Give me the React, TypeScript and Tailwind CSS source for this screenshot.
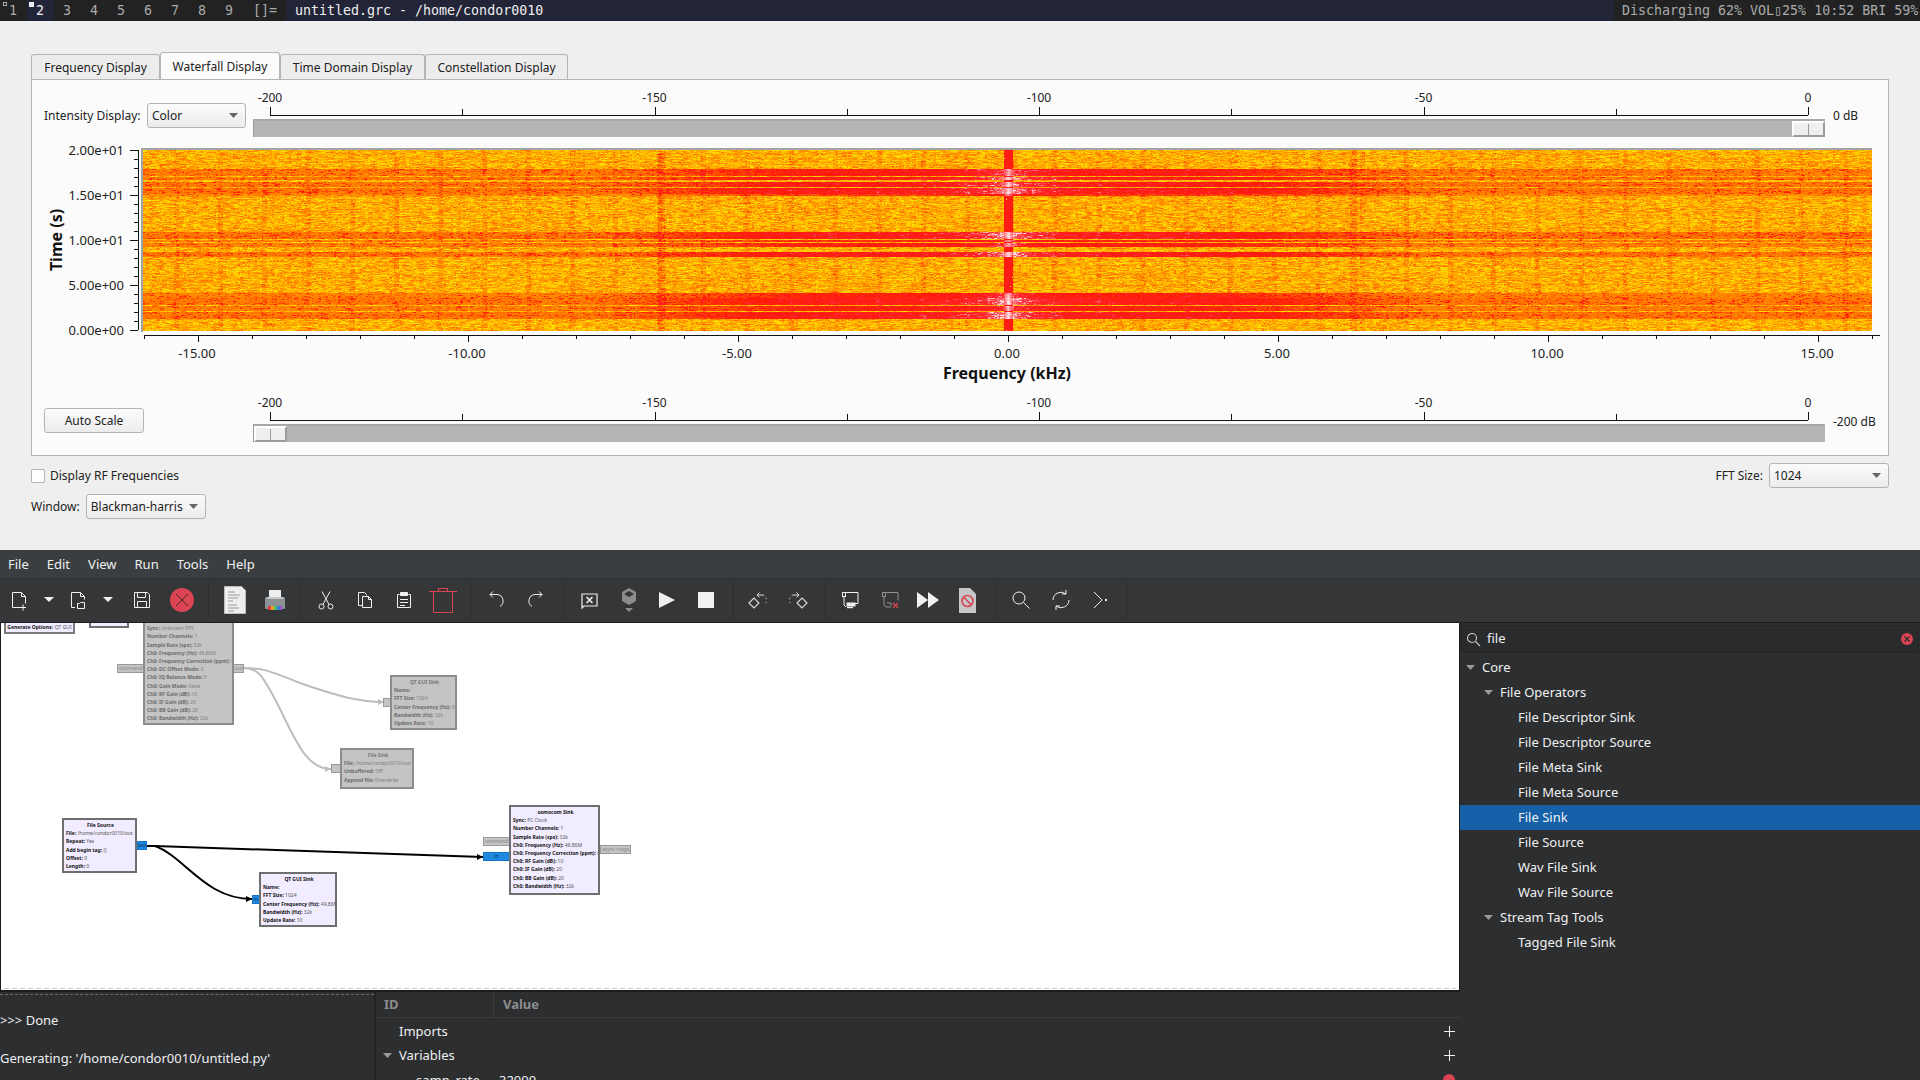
import { useEffect, useRef } from "react";

const TAGS = ["1", "2", "3", "4", "5", "6", "7", "8", "9"];
const TABS = ["Frequency Display", "Waterfall Display", "Time Domain Display", "Constellation Display"];

// waterfall bands: first row, last row (relative to the plot), strength
const BANDS: [number, number, number][] = [
  [19, 25, 0.85], [27, 29, 1], [32, 36, 0.95], [38, 43, 1], [44, 45, 0.6],
  [82, 88, 1], [90, 91, 0.7], [93, 96, 0.8], [102, 106, 1],
  [143, 147, 0.8], [148, 154, 1], [156, 160, 0.8], [162, 168, 1],
];

const STOPS: [number, number, number, number][] = [
  [0, 255, 255, 0], [0.18, 255, 214, 0], [0.3, 255, 168, 0], [0.45, 255, 105, 0],
  [0.58, 255, 24, 8], [0.8, 255, 40, 50], [1, 255, 228, 232],
];

function colorFor(p: number): [number, number, number] {
  const v = Math.max(0, Math.min(1, p));
  for (let i = 1; i < STOPS.length; i++) {
    if (v <= STOPS[i][0]) {
      const a = STOPS[i - 1];
      const b = STOPS[i];
      const t = (v - a[0]) / (b[0] - a[0]);
      return [a[1] + (b[1] - a[1]) * t, a[2] + (b[2] - a[2]) * t, a[3] + (b[3] - a[3]) * t];
    }
  }
  return [255, 228, 232];
}

function Waterfall() {
  const ref = useRef<HTMLCanvasElement>(null);
  useEffect(() => {
    const ctx = ref.current?.getContext("2d");
    if (!ctx) return;
    const W = 1729;
    const H = 181;
    let seed = 12345;
    const rnd = () => {
      seed = (seed * 1664525 + 1013904223) >>> 0;
      return seed / 4294967296;
    };
    const rowBand = new Array(H).fill(0);
    const rowJitter = rowBand.map(() => (rnd() - 0.5) * 0.05);
    BANDS.forEach(([a, b, s]) => {
      for (let y = a; y <= b; y++) rowBand[y] = s;
    });
    const img = ctx.createImageData(W, H);
    for (let y = 0; y < H; y++) {
      let prev = rnd();
      let cur = rnd();
      let col = -1;
      for (let x = 0; x < W; x++) {
        const c = Math.floor(x / 1.69);
        if (c !== col) {
          col = c;
          if (c % 2 === 0) prev = cur;
          cur = rnd();
        }
        const dx = x + 143 - 1008;
        const dist = Math.abs(dx);
        let p = 0.285 + (cur * 0.6 + prev * 0.4 - 0.5) * 0.36 + rowJitter[y];
        // vertical stripes
        const sx = (x + 143 - 175 + 440) % 43.9;
        if (sx < 5) p += 0.05;
        if (Math.abs(x + 143 - 661) < 4 || Math.abs(x + 143 - 1353) < 4) p += 0.08;
        // horizontal bursts
        const env = dist < 200 ? 1 : dist > 420 ? 0 : (420 - dist) / 220;
        const band = rowBand[y];
        if (band > 0) {
          p = Math.max(p, 0.3) + band * (0.11 + 0.23 * env) + (cur - 0.5) * 0.07;
          p += band * 0.3 * Math.exp(-dist / 30);
        }
        // carrier
        if (dist < 5) {
          p = band > 0 ? 0.72 + band * 0.28 * (1 - dist / 9) + (cur - 0.5) * 0.08 : 0.66 - dist * 0.01;
        }
        let rgb = colorFor(p);
        if (band === 0 && rnd() < 0.0012) rgb = [170, 255, 70];
        const i = (y * W + x) * 4;
        img.data[i] = rgb[0];
        img.data[i + 1] = rgb[1];
        img.data[i + 2] = rgb[2];
        img.data[i + 3] = 255;
      }
    }
    ctx.putImageData(img, 0, 0);
  }, []);
  return <canvas ref={ref} width={1729} height={181} className="block" />;
}

function Caret({ className = "" }: { className?: string }) {
  return (
    <svg width="9" height="5" viewBox="0 0 9 5" className={className}>
      <path d="M0 0h9L4.5 5z" fill="currentColor" />
    </svg>
  );
}

function Combo({ label, className }: { label: string; className: string }) {
  return (
    <div className={`flex h-[25px] items-center justify-between rounded-[3px] border border-[#b4b4b4] bg-gradient-to-b from-[#fbfbfb] to-[#ececec] pl-[4px] pr-[7px] text-[12px] text-[#222] ${className}`}>
      <span>{label}</span>
      <Caret className="text-[#666]" />
    </div>
  );
}

function Scale({ top }: { top: number }) {
  const labels = ["-200", "-150", "-100", "-50", "0"];
  const ticks = Array.from({ length: 9 }, (_, i) => 17 + i * 192.25);
  return (
    <svg width="1572" height="29" className="block">
      <line x1="17" x2="1555" y1="25.5" y2="25.5" stroke="#111" />
      {ticks.map((x, i) => (
        <line key={i} x1={Math.round(x) + 0.5} x2={Math.round(x) + 0.5} y1={i % 2 ? 19 : 17} y2="25" stroke="#111" />
      ))}
      {labels.map((l, i) => (
        <text key={l} x={17 + i * 384.5} y={top} textAnchor="middle" className="fill-[#222] text-[12px]">{l}</text>
      ))}
    </svg>
  );
}

function Slider({ right }: { right?: boolean }) {
  return (
    <div className={`flex h-[18px] w-[1572px] border-l border-t-2 border-l-[#9a9a9a] border-t-[#a8a8a8] bg-[#b5b5b5] ${right ? "justify-end" : "justify-start"}`}>
      <div className="flex h-[16px] w-[33px] items-center justify-center border-b-2 border-l-2 border-r-2 border-t-2 border-b-[#9c9c9c] border-l-white border-r-[#9c9c9c] border-t-white bg-[#efefef]">
        <div className="h-[11px] w-px bg-[#9a9a9a]" />
      </div>
    </div>
  );
}

function YAxis() {
  const major: [string, number][] = [["2.00e+01", 2], ["1.50e+01", 47], ["1.00e+01", 92], ["5.00e+00", 137], ["0.00e+00", 182]];
  const minor = Array.from({ length: 21 }, (_, i) => 2 + i * 9);
  return (
    <svg width="109" height="184" className="block shrink-0 overflow-visible">
      <line x1="106.5" x2="106.5" y1="2" y2="182" stroke="#111" />
      {minor.map((y, i) => (
        <line key={y} x1={i % 5 === 0 ? 98 : 102} x2="106" y1={y + 0.5} y2={y + 0.5} stroke="#111" />
      ))}
      {major.map(([t, y]) => (
        <text key={t} x="92" y={y + 4.5} textAnchor="end" className="fill-[#222] text-[13px]">{t}</text>
      ))}
      <text transform="translate(29.5 92) rotate(-90)" textAnchor="middle" className="fill-[#111] text-[16px] font-bold">Time (s)</text>
    </svg>
  );
}

function XAxis() {
  const labels = ["-15.00", "-10.00", "-5.00", "0.00", "5.00", "10.00", "15.00"];
  const ticks = Array.from({ length: 33 }, (_, i) => 112 + i * 54);
  return (
    <svg width="1856" height="49" className="block overflow-visible">
      <line x1="112" x2="1848" y1="3.5" y2="3.5" stroke="#111" />
      {ticks.map((x, i) => (
        <line key={x} x1={x + 0.5} x2={x + 0.5} y1="3" y2={i % 5 === 1 ? 10 : 7} stroke="#111" />
      ))}
      {labels.map((l, i) => (
        <text key={l} x={165 + i * 270} y="26" textAnchor="middle" className="fill-[#222] text-[13px]">{l}</text>
      ))}
      <text x="975" y="47" textAnchor="middle" className="fill-[#111] text-[16px] font-bold">Frequency (kHz)</text>
    </svg>
  );
}

type BlockProps = {
  pos: string;
  off?: boolean;
  title?: string;
  rows: [string, string][];
};

function Block({ pos, off, title, rows }: BlockProps) {
  return (
    <div className={`absolute overflow-hidden border-2 pl-[2px] pt-px text-[5px] leading-[8.2px] whitespace-nowrap ${off ? "border-[#8c8c8c] bg-[#c4c4c4] text-[#808080]" : "border-[#6f6f6f] bg-[#f1ecff] text-[#555]"} ${pos}`}>
      <div className={`h-[8.2px] text-center font-bold ${off ? "text-[#777]" : "text-[#111]"}`}>{title}</div>
      {rows.map(([k, v]) => (
        <div key={k}>
          <span className={`font-bold ${off ? "text-[#6c6c6c]" : "text-[#111]"}`}>{k}: </span>
          {v}
        </div>
      ))}
    </div>
  );
}

function Port({ pos, label, blue }: { pos: string; label: string; blue?: boolean }) {
  return (
    <div className={`absolute flex h-[9px] items-center justify-center overflow-hidden border text-[5px] ${blue ? "border-[#1a74c4] bg-[#1f88e0] text-[#0c2c4c]" : "border-[#999] bg-[#c4c4c4] text-[#888]"} ${pos}`}>
      {label}
    </div>
  );
}

function FlowCanvas() {
  return (
    <div className="relative h-[369px] shrink-0 overflow-hidden border-b-2 border-[#1b1c1d] bg-white shadow-[inset_1px_0_0_#1b1c1d,inset_-1px_0_0_#1b1c1d]">
      <svg width="1460" height="368" className="absolute left-0 top-0">
        <g fill="none" stroke="#bdbdbd" strokeWidth="2">
          <path d="M243 45C262 45 268 47 300 60C340 74 360 79 384 79" />
          <path d="M243 45C258 45 262 52 275 76C295 115 305 146 331 146" />
        </g>
        <path d="M384 79l-6-3v6zM331 146l-6-3v6z" fill="#bdbdbd" />
        <g fill="none" stroke="#000" strokeWidth="2">
          <path d="M147 223L155 223L483 234" />
          <path d="M147 223L155 223C185 234 205 276 252 276" />
        </g>
        <path d="M483 234l-6-3v6zM252 276l-6-3v6z" fill="#000" />
        <line x1="4" x2="1456" y1="365.5" y2="365.5" stroke="#c8c8c8" strokeDasharray="5 3" />
      </svg>
      <div className="absolute -top-[23px] left-[4px] flex h-[34px] w-[71px] items-end justify-center gap-[2px] border-2 border-[#7a7a7a] bg-[#f1ecff] pb-[1px] text-[5px] leading-[8px] whitespace-nowrap">
        <b className="text-[#111]">Generate Options:</b>
        <span className="text-[#555]">QT GUI</span>
      </div>
      <div className="absolute -top-[20px] left-[89px] h-[25px] w-[40px] border-2 border-[#6f6f6f] bg-[#f1ecff]" />
      <Port pos="left-[117px] top-[41px] w-[27px]" label="command" />
      <Port pos="left-[233px] top-[41px] w-[11px]" label="out" />
      <Block
        off
        pos="left-[143px] -top-[10px] h-[112px] w-[91px]"
        rows={[
          ["Sync", "Unknown PPS"], ["Number Channels", "1"], ["Sample Rate (sps)", "32k"], ["Ch0: Frequency (Hz)", "49.86M"],
          ["Ch0: Frequency Correction (ppm)", "0"], ["Ch0: DC Offset Mode", "0"], ["Ch0: IQ Balance Mode", "0"], ["Ch0: Gain Mode", "False"],
          ["Ch0: RF Gain (dB)", "10"], ["Ch0: IF Gain (dB)", "20"], ["Ch0: BB Gain (dB)", "20"], ["Ch0: Bandwidth (Hz)", "32k"],
        ]}
      />
      <Port pos="left-[383px] top-[75px] w-[8px]" label="" />
      <Block
        off
        pos="left-[390px] top-[52px] h-[55px] w-[67px]"
        title="QT GUI Sink"
        rows={[["Name", ""], ["FFT Size", "1024"], ["Center Frequency (Hz)", "0"], ["Bandwidth (Hz)", "32k"], ["Update Rate", "10"]]}
      />
      <Port pos="left-[331px] top-[141px] w-[10px]" label="" />
      <Block
        off
        pos="left-[340px] top-[125px] h-[41px] w-[74px]"
        title="File Sink"
        rows={[["File", "/home/condor0010/out"], ["Unbuffered", "Off"], ["Append file", "Overwrite"]]}
      />
      <Block
        pos="left-[62px] top-[195px] h-[55px] w-[75px]"
        title="File Source"
        rows={[["File", "/home/condor0010/out"], ["Repeat", "Yes"], ["Add begin tag", "()"], ["Offset", "0"], ["Length", "0"]]}
      />
      <Port blue pos="left-[137px] top-[218px] w-[10px]" label="out" />
      <Port blue pos="left-[252px] top-[272px] w-[8px]" label="in" />
      <Block
        pos="left-[259px] top-[249px] h-[55px] w-[78px]"
        title="QT GUI Sink"
        rows={[["Name", ""], ["FFT Size", "1024"], ["Center Frequency (Hz)", "49.86M"], ["Bandwidth (Hz)", "32k"], ["Update Rate", "10"]]}
      />
      <Port pos="left-[483px] top-[214px] w-[27px]" label="command" />
      <Port blue pos="left-[483px] top-[229px] w-[27px]" label="in" />
      <Port pos="left-[600px] top-[222px] w-[31px]" label="async msgs" />
      <Block
        pos="left-[509px] top-[182px] h-[90px] w-[91px]"
        title="osmocom Sink"
        rows={[
          ["Sync", "PC Clock"], ["Number Channels", "1"], ["Sample Rate (sps)", "32k"], ["Ch0: Frequency (Hz)", "49.86M"],
          ["Ch0: Frequency Correction (ppm)", "0"], ["Ch0: RF Gain (dB)", "10"], ["Ch0: IF Gain (dB)", "20"], ["Ch0: BB Gain (dB)", "20"], ["Ch0: Bandwidth (Hz)", "32k"],
        ]}
      />
    </div>
  );
}

// toolbar drawings, all on a 28x28 box centred in their cell
const S = { fill: "none", stroke: "#eff0f1", strokeWidth: 1 };
const ICONS: Record<string, React.ReactNode> = {
  newFile: <g {...S}><path d="M7.5 6.5h9l4 4v7M15 21.5H7.5v-15" /><path d="M16.5 6.5v4h4M15 21.5h6M18 18.5v6" /></g>,
  openFile: <g {...S}><path d="M7.5 6.5h9l4 4v3M11 21.5H7.5v-15M16.5 6.5v4h4" /><path d="M13.5 22.5v-5h2l1-1h4v6z" /></g>,
  save: <g {...S}><path d="M6.5 6.5h13l2 2v13h-15z" /><path d="M9.5 6.5v5h8v-5M9.5 21.5v-6h9v6" /></g>,
  stopRed: <g><circle cx="14" cy="14" r="12" fill="#da4453" /><path d="M8 8l12 12M20 8L8 20" stroke="#4a2328" strokeWidth="1" /></g>,
  paper: (
    <g>
      <path d="M3.5 .5h17l4 4v23h-21z" fill="#eeeeee" stroke="#bdbdbd" />
      <path d="M7 6h7M7 9h12M7 12h10M7 15h5M7 19h9M7 22h11M7 25h6" stroke="#9a9a9a" />
    </g>
  ),
  printer: (
    <g>
      <rect x="8" y="4" width="12" height="8" fill="#eeeeee" />
      <rect x="4" y="11" width="20" height="12" rx="1" fill="#8b9095" />
      <rect x="6" y="11" width="16" height="2" fill="#c5c8cb" />
      <rect x="7" y="20" width="3" height="4" fill="#e23b3b" />
      <rect x="10" y="20" width="3" height="4" fill="#f0a030" />
      <rect x="13" y="20" width="3" height="4" fill="#3fbf5f" />
      <rect x="16" y="20" width="3" height="4" fill="#3a7fd8" />
      <rect x="19" y="20" width="2" height="4" fill="#9a50c8" />
    </g>
  ),
  cut: <g {...S}><path d="M10 5.5l7 13M18 5.5l-7 13" /><circle cx="9.5" cy="20.5" r="2.5" /><circle cx="18.5" cy="20.5" r="2.5" /></g>,
  copy: <g {...S}><path d="M7.5 6.5h6l2 2v1M11 19.5H7.5v-13" /><path d="M11.5 10.5h6l3 3v8h-9z" /><path d="M17.5 10.5v3h3" /></g>,
  paste: <g {...S}><path d="M9.5 8.5h-2v13h13v-13h-2" /><path d="M10.5 6.5h7v3h-7z" fill="#eff0f1" /><path d="M10 13.5h8M10 16.5h8M10 19.5h5" /></g>,
  trash: <g fill="none" stroke="#da4453"><path d="M0 5.5h28M9.5 5.5v-3h9v3M4.5 5.5v21h19v-21" /></g>,
  undo: <g {...S}><path d="M8 8.5h7a6.5 6.5 0 0 1 3 12" /><path d="M11 5.5l-3 3l3 3" /></g>,
  redo: <g {...S}><path d="M20 8.5h-7a6.5 6.5 0 0 0 -3 12" /><path d="M17 5.5l3 3l-3 3" /></g>,
  blockX: <g {...S} strokeWidth="1.2"><path d="M7 8h15v12H9l-2 2z" /><path d="M11.5 11l6 6M17.5 11l-6 6" strokeWidth="1.6" /></g>,
  hexa: <g><path d="M14 2l7 4v9l-7 4l-7-4v-9z" fill="#8a8c8e" /><path d="M14 5l5 3l-5 3l-5-3z" fill="#333537" /><path d="M10 22h8l-4 4z" fill="#8a8c8e" /></g>,
  play: <path d="M6 6l16 8l-16 8z" fill="#eff0f1" />,
  stop: <rect x="6" y="6" width="16" height="16" fill="#eff0f1" />,
  rotL: <g fill="none" stroke="#d8d9da"><path d="M5 17l5-5l5 5l-5 5z" strokeWidth="1.2" /><path d="M19 9l-6 0M15.5 6.5l-2.5 2.5l2.5 2.5" /><path d="M19 9a6 6 0 0 1 3 8" strokeDasharray="1.5 2.5" /></g>,
  rotR: <g fill="none" stroke="#d8d9da"><path d="M23 17l-5-5l-5 5l5 5z" strokeWidth="1.2" /><path d="M9 9l6 0M12.5 6.5l2.5 2.5l-2.5 2.5" /><path d="M9 9a6 6 0 0 0 -3 8" strokeDasharray="1.5 2.5" /></g>,
  run: <g {...S}><path d="M10 6.5h12v11H14" /><rect x="6.5" y="6.5" width="3" height="4" /><path d="M8 11v8l2 2" /><rect x="11" y="17" width="8" height="3" fill="#eff0f1" /><path d="M11 21.5h6" strokeWidth="1.4" /></g>,
  kill: <g fill="none" stroke="#8f9193"><path d="M10 6.5h12v8" /><rect x="6.5" y="6.5" width="3" height="4" /><path d="M8 11v8l2 2h5M11 17h4v3" /><path d="M17 17l5 5M22 17l-5 5" stroke="#da4453" strokeWidth="1.4" /></g>,
  ff: <path d="M3 6l11 8l-11 8zM14 6l11 8l-11 8z" fill="#eff0f1" />,
  noDoc: (
    <g>
      <path d="M6 2h11l6 6v19H6z" fill="#c5c6c7" />
      <circle cx="14.5" cy="15" r="5.5" fill="none" stroke="#da4453" strokeWidth="1.6" />
      <path d="M10.8 11.3l7.4 7.4" stroke="#da4453" strokeWidth="1.6" />
    </g>
  ),
  search: <g {...S}><circle cx="12" cy="12" r="6" /><path d="M16.5 16.5l6 6" /></g>,
  refresh: <g {...S}><path d="M6 14a8 8 0 0 1 13-6M22 14a8 8 0 0 1 -13 6" /><path d="M19 4v4h-4M9 24v-4h4" /></g>,
  term: <g><path d="M8 6l8 8l-8 8" fill="none" stroke="#eff0f1" /><rect x="19" y="13" width="2" height="2" fill="#eff0f1" /></g>,
};

function Tool({ name, w = "w-[40px]" }: { name: string; w?: string }) {
  return (
    <div className={`flex shrink-0 items-center justify-center ${w}`}>
      <svg width="28" height="28" viewBox="0 0 28 28">{ICONS[name]}</svg>
    </div>
  );
}

function Drop({ w }: { w: string }) {
  return (
    <div className={`flex shrink-0 items-center justify-center ${w}`}>
      <svg width="10" height="5" viewBox="0 0 10 5"><path d="M0 0h10L5 5z" fill="#eff0f1" /></svg>
    </div>
  );
}

function Sep({ className }: { className: string }) {
  return <div className={`h-[38px] w-px shrink-0 bg-[#2a2c2d] ${className}`} />;
}

function Toolbar() {
  return (
    <div className="flex h-[46px] shrink-0 items-center border-b border-[#1d1e1f] bg-[#343638]">
      <Tool name="newFile" w="w-[38px]" />
      <Drop w="w-[22px]" />
      <Tool name="openFile" w="w-[36px]" />
      <Drop w="w-[24px]" />
      <Tool name="save" w="w-[44px]" />
      <Tool name="stopRed" w="w-[36px]" />
      <Sep className="ml-[8px] mr-[6px]" />
      <Tool name="paper" />
      <Tool name="printer" w="w-[39px]" />
      <Sep className="ml-[5px] mr-[6px]" />
      <Tool name="cut" w="w-[39px]" />
      <Tool name="copy" w="w-[39px]" />
      <Tool name="paste" w="w-[39px]" />
      <Tool name="trash" />
      <Sep className="ml-[7px] mr-[5px]" />
      <Tool name="undo" />
      <Tool name="redo" />
      <Sep className="ml-[7px] mr-[5px]" />
      <Tool name="blockX" />
      <Tool name="hexa" w="w-[39px]" />
      <Tool name="play" w="w-[38px]" />
      <Tool name="stop" />
      <Sep className="ml-[7px] mr-[4px]" />
      <Tool name="rotL" />
      <Tool name="rotR" />
      <Sep className="ml-[7px] mr-[4px]" />
      <Tool name="run" />
      <Tool name="kill" w="w-[39px]" />
      <Tool name="ff" w="w-[38px]" />
      <Tool name="noDoc" />
      <Sep className="ml-[8px] mr-[5px]" />
      <Tool name="search" />
      <Tool name="refresh" w="w-[39px]" />
      <Tool name="term" />
      <Sep className="ml-[6px]" />
    </div>
  );
}

function TreeRow({ label, indent, open, selected }: { label: string; indent: string; open?: boolean; selected?: boolean }) {
  return (
    <div className={`flex h-[25px] items-center ${indent} ${selected ? "bg-[#1560a8]" : ""}`}>
      {open && <Caret className="mr-[7px] text-[#9a9a9a]" />}
      <span>{label}</span>
    </div>
  );
}

function BlockTree() {
  const leaves = ["File Descriptor Sink", "File Descriptor Source", "File Meta Sink", "File Meta Source"];
  const leaves2 = ["File Source", "Wav File Sink", "Wav File Source"];
  return (
    <div className="w-[460px] shrink-0 bg-[#2d2e30] pt-[2px] text-[13px] text-[#eff0f1]">
      <div className="mx-[1px] flex h-[28px] items-center rounded-[3px] border border-[#232425] bg-[#2a2b2d] pl-[4px] pr-[4px]">
        <svg width="15" height="15" viewBox="0 0 15 15" fill="none" stroke="#c8c9ca" strokeWidth="1.1">
          <circle cx="6" cy="6" r="4.5" />
          <path d="M9.5 9.5l4.5 4.5" />
        </svg>
        <span className="ml-[6px] flex-1">file</span>
        <svg width="14" height="14" viewBox="0 0 14 14">
          <circle cx="7" cy="7" r="6" fill="#da4453" />
          <path d="M4.5 4.5l5 5M9.5 4.5l-5 5" stroke="#2d2e30" strokeWidth="1.3" />
        </svg>
      </div>
      <div className="pt-[2px]">
        <TreeRow label="Core" indent="pl-[6px]" open />
        <TreeRow label="File Operators" indent="pl-[24px]" open />
        {leaves.map((l) => <TreeRow key={l} label={l} indent="pl-[58px]" />)}
        <TreeRow label="File Sink" indent="pl-[58px]" selected />
        {leaves2.map((l) => <TreeRow key={l} label={l} indent="pl-[58px]" />)}
        <TreeRow label="Stream Tag Tools" indent="pl-[24px]" open />
        <TreeRow label="Tagged File Sink" indent="pl-[58px]" />
      </div>
    </div>
  );
}

function Plus() {
  return (
    <svg width="11" height="11" viewBox="0 0 11 11">
      <path d="M5.5 0v11M0 5.5h11" stroke="#eff0f1" />
    </svg>
  );
}

function VarTable() {
  return (
    <div className="flex-1 overflow-hidden text-[13px] text-[#eff0f1]">
      <div className="flex h-[26px] items-center border-b border-[#3a3b3d] font-bold text-[#8c8d8e]">
        <div className="flex h-full w-[118px] items-center border-r border-[#3a3b3d] pl-[8px]">ID</div>
        <div className="pl-[9px]">Value</div>
      </div>
      <div className="mt-px flex h-[24.5px] items-center justify-between pl-[23px] pr-[5px]">
        <span>Imports</span>
        <Plus />
      </div>
      <div className="flex h-[24.5px] items-center justify-between pl-[7px] pr-[5px]">
        <span className="flex items-center">
          <Caret className="mr-[7px] text-[#9a9a9a]" />
          Variables
        </span>
        <Plus />
      </div>
      <div className="flex h-[24.5px] items-center pl-[40px] pr-[4px]">
        <span className="w-[83px]">samp_rate</span>
        <span className="flex-1">32000</span>
        <svg width="14" height="14" viewBox="0 0 14 14">
          <circle cx="7" cy="7" r="6" fill="#da4453" />
        </svg>
      </div>
    </div>
  );
}

export default function App() {
  return (
    <div className="flex h-[1080px] w-[1920px] flex-col overflow-hidden bg-[#efefef] font-['Noto_Sans',sans-serif]">
      {/* dwm bar */}
      <div className="flex h-[21px] shrink-0 items-center bg-[#222222] font-['DejaVu_Sans_Mono',monospace] text-[13.3px] text-[#aaaaaa]">
        {TAGS.map((t) => (
          <div key={t} className={`relative flex h-full w-[27px] items-center justify-center pr-px pt-px ${t === "2" ? "bg-[#222538] text-[#eeeeee]" : ""}`}>
            {t === "1" && <div className="absolute left-[3px] top-[2px] h-[4px] w-[4px] border border-[#aaaaaa]" />}
            {t === "2" && <div className="absolute left-[2px] top-[2px] h-[5px] w-[5px] bg-[#eeeeee]" />}
            {t}
          </div>
        ))}
        <div className="w-[43px] pl-[10px] pt-px">[]=</div>
        <div className="flex h-full flex-1 items-center bg-[#222538] pl-[9px] pt-px text-[#eeeeee]">untitled.grc - /home/condor0010</div>
        <div className="w-[306px] pl-[8px] pt-px whitespace-nowrap">Discharging 62% VOL▯25% 10:52 BRI 59%</div>
      </div>

      {/* flowgraph output window */}
      <div className="h-[529px] shrink-0 px-[31px] pt-[31px]">
        <div className="flex h-[27px] items-end">
          {TABS.map((t, i) => (
            <div
              key={t}
              className={`flex items-center justify-center rounded-t-[3px] border border-b-0 border-[#b4b4b4] pt-px text-[12px] text-[#222] ${i === 1 ? "h-[27px] bg-[#fbfbfb]" : "h-[25px] bg-[#ececec]"} ${["w-[129px]", "w-[120px]", "w-[145px]", "w-[143px]"][i]}`}
            >
              {t}
            </div>
          ))}
        </div>
        <div className="h-[377px] w-[1858px] border border-[#b4b4b4] bg-[#fbfbfb]">
          <div className="flex h-[68px] items-start pt-[23px] text-[12px] text-[#222]">
            <div className="w-[115px] pl-[12px] leading-[25px]">Intensity Display:</div>
            <Combo label="Color" className="w-[99px]" />
            <div className="-mt-[13px] ml-[7px]">
              <Scale top={12} />
              <Slider right />
            </div>
            <div className="ml-[8px] leading-[25px]">0 dB</div>
          </div>
          <div className="flex h-[184px]">
            <YAxis />
            <div className="border-l-2 border-t-2 border-[#a3a3a3]">
              <Waterfall />
            </div>
          </div>
          <XAxis />
          <div className="flex items-start text-[12px] text-[#222]">
            <div className="ml-[12px] mt-[27px] flex h-[25px] w-[100px] items-center justify-center rounded-[3px] border border-[#b4b4b4] bg-gradient-to-b from-[#fbfbfb] to-[#ececec]">Auto Scale</div>
            <div className="ml-[109px] mt-[14px]">
              <Scale top={12} />
              <Slider />
            </div>
            <div className="ml-[8px] mt-[28px] leading-[25px]">-200 dB</div>
          </div>
        </div>
        <div className="flex items-center justify-between pt-[7px] text-[12px] text-[#222]">
          <div className="flex items-center">
            <div className="h-[14px] w-[14px] rounded-[2px] border border-[#b4b4b4] bg-white" />
            <span className="ml-[5px]">Display RF Frequencies</span>
          </div>
          <div className="flex items-center">
            <span className="mr-[6px]">FFT Size:</span>
            <Combo label="1024" className="w-[120px]" />
          </div>
        </div>
        <div className="flex items-center pt-[6px] text-[12px] text-[#222]">
          <span className="mr-[6px]">Window:</span>
          <Combo label="Blackman-harris" className="w-[120px]" />
        </div>
      </div>

      {/* GNU Radio Companion window */}
      <div className="flex min-h-0 flex-1 flex-col bg-[#2d2e30]">
        <div className="flex h-[27px] shrink-0 items-center gap-[18px] bg-[#3a3e40] pl-[8px] pt-[2px] text-[13px] text-[#eff0f1]">
          {["File", "Edit", "View", "Run", "Tools", "Help"].map((m) => <span key={m}>{m}</span>)}
        </div>
        <Toolbar />
        <div className="flex min-h-0 flex-1">
          <div className="flex w-[1460px] shrink-0 flex-col">
            <FlowCanvas />
            <div className="flex min-h-0 flex-1 overflow-hidden">
              <div className="w-[376px] shrink-0 border-r-2 border-[#232425] text-[13px] leading-[20px] text-[#eff0f1]">
                <div className="mt-[2px] border-t border-dashed border-[#6a6b6c] pt-[15px]">&gt;&gt;&gt; Done</div>
                <div className="mt-[18px]">Generating: '/home/condor0010/untitled.py'</div>
              </div>
              <VarTable />
            </div>
          </div>
          <BlockTree />
        </div>
      </div>
    </div>
  );
}
